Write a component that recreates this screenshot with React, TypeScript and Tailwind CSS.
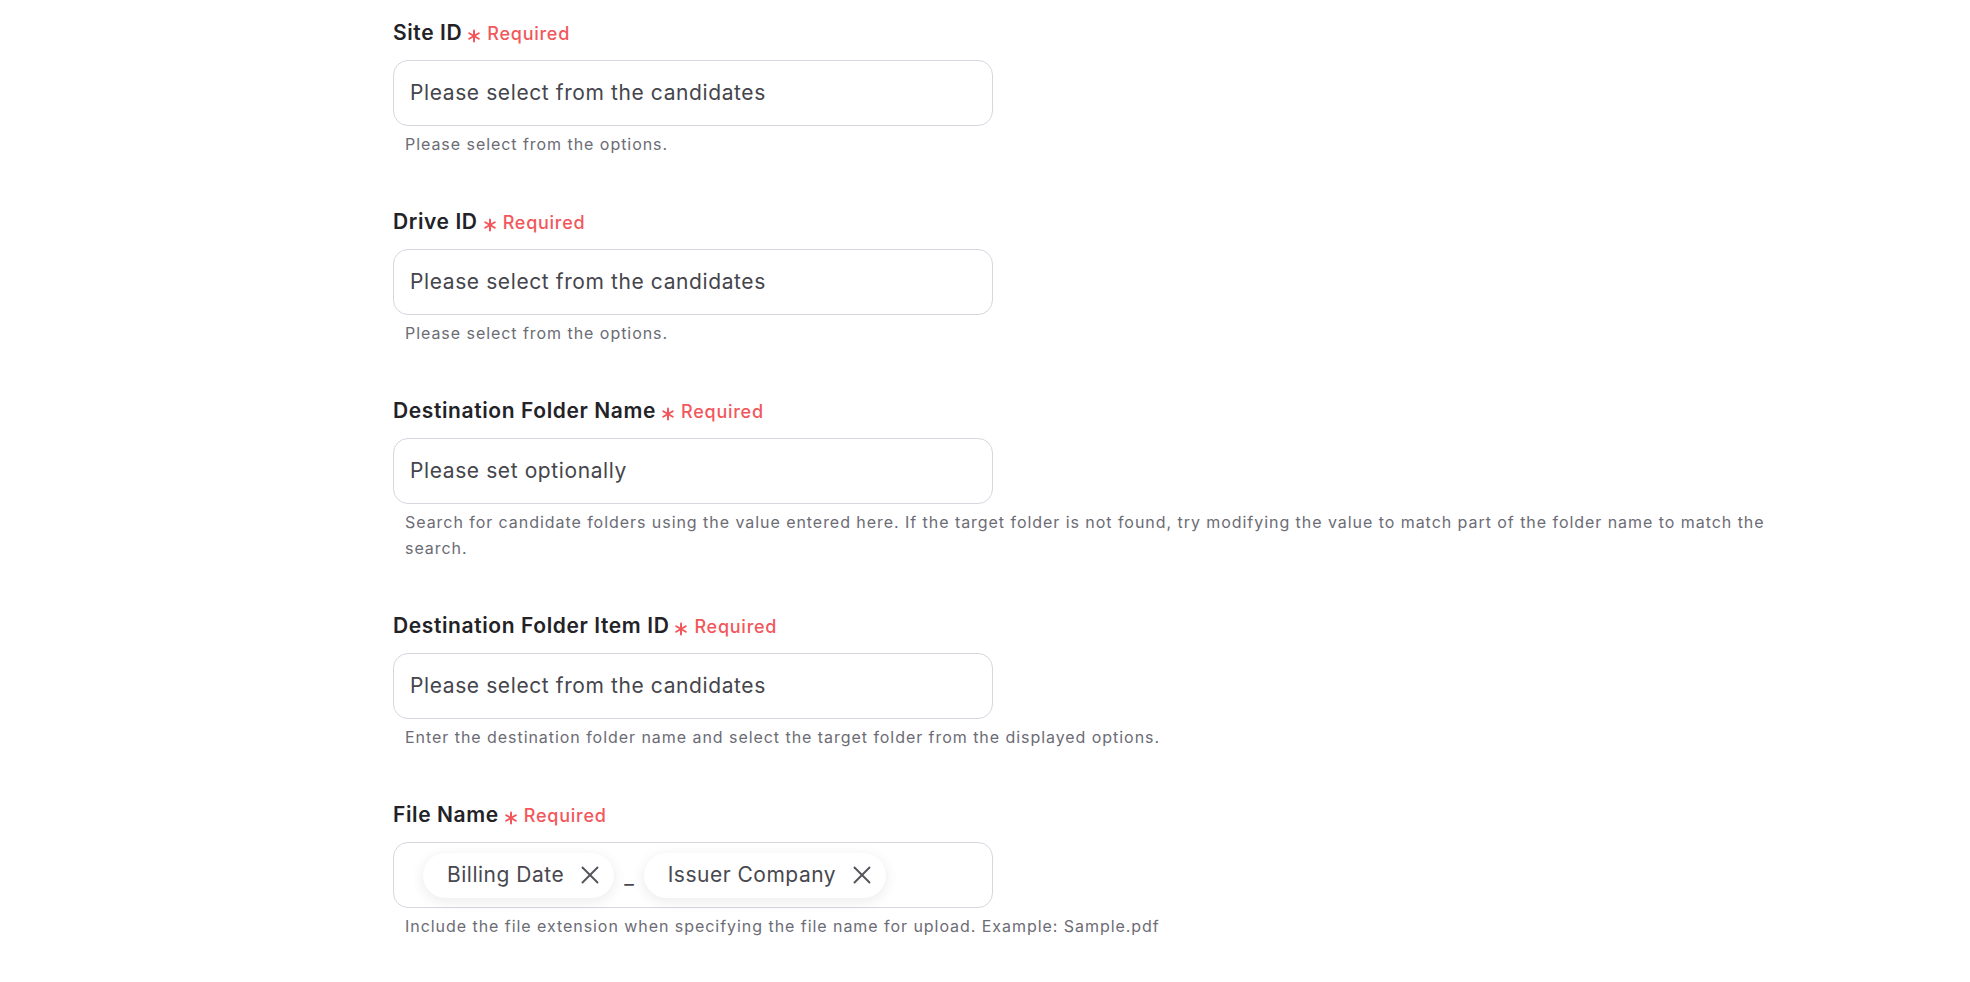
import React from "react";

type Field = {
  label: string;
  placeholder?: string;
  help: string;
  chips?: string[];
};

const fields: Field[] = [
  {
    label: "Site ID",
    placeholder: "Please select from the candidates",
    help: "Please select from the options.",
  },
  {
    label: "Drive ID",
    placeholder: "Please select from the candidates",
    help: "Please select from the options.",
  },
  {
    label: "Destination Folder Name",
    placeholder: "Please set optionally",
    help: "Search for candidate folders using the value entered here. If the target folder is not found, try modifying the value to match part of the folder name to match the search.",
  },
  {
    label: "Destination Folder Item ID",
    placeholder: "Please select from the candidates",
    help: "Enter the destination folder name and select the target folder from the displayed options.",
  },
  {
    label: "File Name",
    chips: ["Billing Date", "Issuer Company"],
    help: "Include the file extension when specifying the file name for upload. Example: Sample.pdf",
  },
];

function RequiredStar() {
  return (
    <svg
      width="14"
      height="14"
      viewBox="0 0 14 14"
      className="ml-[5px] mr-[6px] self-center translate-y-[3px] text-[#f2575c]"
      fill="none"
      stroke="currentColor"
      strokeWidth="2"
      strokeLinecap="round"
    >
      <path d="M7 1.5v11" />
      <path d="M2.2 4.25l9.6 5.5" />
      <path d="M2.2 9.75l9.6-5.5" />
    </svg>
  );
}

function CloseIcon() {
  return (
    <svg
      width="18"
      height="18"
      viewBox="0 0 18 18"
      fill="none"
      stroke="currentColor"
      strokeWidth="1.9"
      strokeLinecap="round"
      className="text-[#55555d]"
    >
      <path d="M1.5 1.5l15 15" />
      <path d="M16.5 1.5l-15 15" />
    </svg>
  );
}

function Chip({ text }: { text: string }) {
  return (
    <div className="flex items-center h-[45px] pl-6 pr-[15px] gap-[17px] rounded-full bg-white shadow-[0_3px_14px_rgba(20,20,40,0.09)]">
      <span className="text-[21px] text-[#48484f] tracking-[0.5px]">{text}</span>
      <CloseIcon />
    </div>
  );
}

function FormField({ field }: { field: Field }) {
  return (
    <div className="flex flex-col">
      <div className="flex items-baseline h-[28px] leading-[28px]">
        <span className="text-[21px] font-semibold text-[#222227] tracking-[0.6px]">
          {field.label}
        </span>
        <RequiredStar />
        <span className="text-[18px] font-medium text-[#f2575c] tracking-[0.75px]">
          Required
        </span>
      </div>
      <div className="mt-[13px] h-[66px] w-[600px] rounded-[15px] border border-[#d5d7df] bg-white flex items-center">
        {field.chips ? (
          <div className="flex items-center pl-[29px] gap-[10px]">
            <Chip text={field.chips[0]} />
            <span className="text-[21px] text-[#48484f] translate-y-[2px]">_</span>
            <Chip text={field.chips[1]} />
          </div>
        ) : (
          <span className="pl-4 text-[21px] text-[#45454c] tracking-[0.6px]">
            {field.placeholder}
          </span>
        )}
      </div>
      <p className="mt-[5px] px-3 text-[16px] leading-[26px] tracking-[0.95px] text-[#6c6c75]">
        {field.help}
      </p>
    </div>
  );
}

export default function App() {
  return (
    <div
      className="min-h-screen bg-white pl-[393px] pt-[19px]"
      style={{ fontFamily: "Inter, 'Noto Sans', sans-serif" }}
    >
      <div className="w-[1410px] flex flex-col gap-[51px]">
        {fields.map((f) => (
          <FormField key={f.label} field={f} />
        ))}
      </div>
    </div>
  );
}
